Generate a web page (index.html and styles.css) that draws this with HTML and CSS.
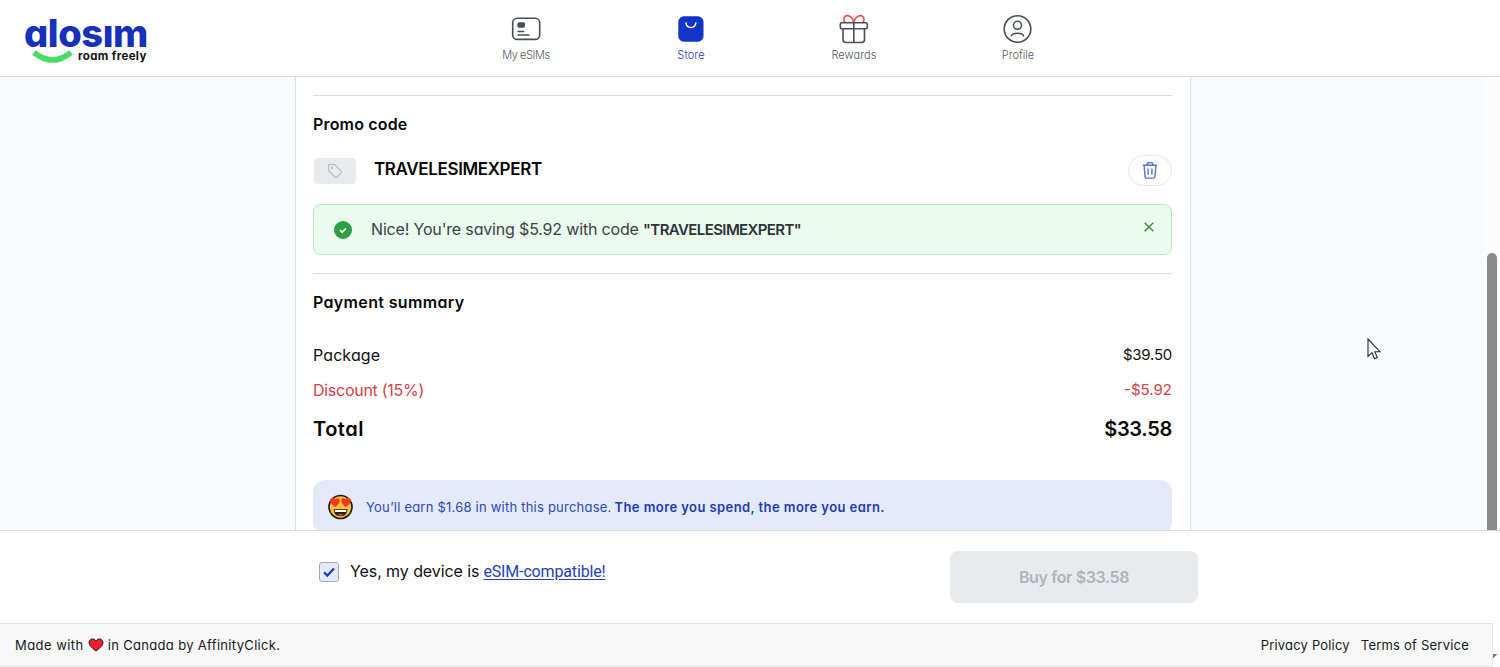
FILE: index.html
```html
<!DOCTYPE html>
<html lang="en">
<head>
<meta charset="utf-8">
<title>aloSIM – Checkout</title>
<link rel="stylesheet" href="styles.css">
</head>
<body>
<div class="app">
  <header class="header">
    <a class="logo">
      <span class="logo-word">alosım</span>
      <span class="logo-sub">
        <svg class="smile" width="42" height="14" viewBox="0 0 42 14"><path d="M3 2.500Q21.500 17.500 40 2.500" fill="none" stroke="#4cdb62" stroke-width="5.500"/></svg>
        <span class="logo-tag">roam freely</span>
      </span>
    </a>
    <nav class="nav">
      <a class="nav-item">
        <svg width="30" height="30" viewBox="0 0 30 30" fill="none" stroke="#4b4f54" stroke-linecap="round"><rect x="1.700" y="4.200" width="27" height="21.200" rx="4.500" stroke-width="1.600"/><rect x="6.300" y="8.300" width="7.700" height="5.500" rx="1.700" fill="#4b4f54" stroke="none"/><path d="M7 17.500h5.800M7 21h11" stroke-width="1.300"/></svg>
        <span class="nav-label nav-esims">My eSIMs</span>
      </a>
      <a class="nav-item item-store">
        <svg width="30" height="30" viewBox="0 0 30 30"><rect x="2.300" y="2.300" width="25.200" height="25.400" rx="5.500" fill="#1434c8"/><path d="M10 9c.8 6 9 6 9.800 0" fill="none" stroke="#fff" stroke-width="1.600" stroke-linecap="round"/></svg>
        <span class="nav-label nav-store">Store</span>
      </a>
      <a class="nav-item">
        <svg width="30" height="30" viewBox="0 0 30 30" fill="none" stroke="#4b4f54" stroke-width="1.600" stroke-linejoin="round"><path d="M14.800 8.500C13 .5 4.800-.5 4.800 5.500q0 2 1.300 3M14.800 8.500C16.500.5 25-.5 25 5.500q0 2-1.300 3" stroke="#ee4a4f"/><rect x="1.300" y="8.800" width="27" height="6" rx="1.500"/><path d="M4 14.800v10.700q0 3 3 3h15.500q3 0 3-3V14.800M14.800 8.800v19.700"/></svg>
        <span class="nav-label nav-rewards">Rewards</span>
      </a>
      <a class="nav-item">
        <svg width="30" height="30" viewBox="0 0 30 30" fill="none" stroke="#4b4f54" stroke-width="1.600" stroke-linecap="round"><circle cx="14.500" cy="15" r="13.300"/><circle cx="14.500" cy="11.300" r="4"/><path d="M8.500 21.700c1-3.200 11-3.200 12 0"/></svg>
        <span class="nav-label nav-profile">Profile</span>
      </a>
    </nav>
  </header>

  <main class="main">
    <section class="card">
      <div class="promo">
        <h2 class="title title-promo">Promo code</h2>
        <div class="code-row">
          <span class="tag"><svg width="16" height="16" viewBox="0 0 16 16" fill="none" stroke="#b9bcc4" stroke-width="1.100" stroke-linejoin="round"><path d="M1.500 2.500Q1.500 1.500 2.500 1.500H7.500L14 8Q15 9 14 10L10 14Q9 15 8 14L1.500 7.500Z"/><circle cx="4.800" cy="4.800" r=".8"/></svg></span>
          <span class="code">TRAVELESIMEXPERT</span>
          <button class="trash"><svg width="18" height="19" viewBox="0 0 18 20" fill="none" stroke="#5b74d0" stroke-width="1.500" stroke-linejoin="round"><path d="M1.500 4.500h15M6 4.300V2.800q0-1 1-1h4q1 0 1 1v1.500M2.800 4.500l1 12q.1 1.500 1.600 1.500h7.200q1.500 0 1.600-1.500l1-12M7 8v6.500M11 8v6.500"/></svg></button>
        </div>
        <div class="alert">
          <svg class="ok" width="18" height="18" viewBox="0 0 18 18"><circle cx="9" cy="9" r="9" fill="#2f9e44"/><path d="M6 9.100l2.200 2.100L12 7.400" fill="none" stroke="#fff" stroke-width="1.700"/></svg>
          <span class="alert-text">Nice! You're saving $5.92 with code <b>"TRAVELESIMEXPERT"</b></span>
          <svg class="close" width="10" height="10" viewBox="0 0 10 10"><path d="M.7.7l8.600 8.600M9.300.7L.7 9.300" stroke="#2b8a3e" stroke-width="1.300"/></svg>
        </div>
      </div>
      <div class="summary">
        <h2 class="title title-pay">Payment summary</h2>
        <div class="row"><span class="package">Package</span><span class="price">$39.50</span></div>
        <div class="row discount"><span class="disc">Discount (15%)</span><span class="price-disc">-$5.92</span></div>
        <div class="row total"><span class="tot">Total</span><span class="price-tot">$33.58</span></div>
      </div>
      <div class="earn">
        <svg width="26" height="26" viewBox="0 0 26 26"><circle cx="12.500" cy="13" r="11.500" fill="#fcbd3c" stroke="#211c19" stroke-width="1.700"/><path d="M7 13Q1 8.500 2.300 5.500C4 2.800 6.500 3.500 7.500 5.200 9.500 3.200 12 4.500 11.600 7.200Q11 10.500 7 13ZM18 13Q24 8.500 22.700 5.500C21 2.800 18.500 3.500 17.500 5.200 15.500 3.200 13 4.500 13.400 7.200Q14 10.500 18 13Z" fill="#ed3b20"/><path d="M5.500 15.300h14q-.5 7-7 7t-7-7Z" fill="#26201d"/><path d="M6.800 16h11.400v2H6.800Z" fill="#fff"/><path d="M9.500 20.800q3-1.600 6 0-3 1.500-6 0Z" fill="#ed5a35"/></svg>
        <span class="earn-text">You’ll earn $1.68 in with this purchase. </span><b class="earn-bold">The more you spend, the more you earn.</b>
      </div>
    </section>
    <div class="track"><div class="thumb"></div></div>
    <svg class="cursor" width="14" height="22" viewBox="0 0 14 22"><path d="M1 1v17.500l4-3.800 2.600 6 2.700-1.200-2.500-5.800H13Z" fill="#fff" stroke="#2b2733" stroke-width="1.100"/></svg>
  </main>

  <section class="buybar">
    <label class="confirm">
      <span class="check"><svg width="14" height="12" viewBox="0 0 14 12"><path d="M2 6.300l3.300 3.300L12 2.500" fill="none" stroke="#1c3cb8" stroke-width="2.200"/></svg></span>
      <span class="yes">Yes, my device is</span><a class="compat">eSIM-compatible!</a>
    </label>
    <button class="buy"><span>Buy for $33.58</span></button>
  </section>

  <div class="foot-wrap">
    <footer class="footer">
      <span class="made">Made with</span>
      <svg class="heart" width="16" height="14" viewBox="0 0 16 14"><path d="M8 13Q1 8.200 1 4.500C1.200.5 6.200-.2 8 3 9.800-.2 14.800.5 15 4.500Q15 8.200 8 13Z" fill="#eb2030" stroke="#36191c"/></svg>
      <span class="canada">in Canada by AffinityClick.</span>
      <a class="privacy">Privacy Policy</a>
      <a class="terms">Terms of Service</a>
    </footer>
    <svg class="corner" width="5" height="5" viewBox="0 0 5 5"><path d="M0 0h4.500L0 4.500Z" fill="#77797b"/></svg>
  </div>
</div>
</body>
</html>
```
FILE: styles.css
```css
* { box-sizing: border-box; }
body {
  margin: 0;
  background: #fff;
  color: #111;
  font: 16px/24px Inter, "Open Sans", sans-serif;
  font-feature-settings: "cv11";
  white-space: nowrap;
}
.app { display: flex; flex-direction: column; height: 667px; overflow: hidden; }
h2 { margin: 0; }
button { font: inherit; font-feature-settings: inherit; border: 0; padding: 0; }
svg { display: block; flex: none; }

.header { display: flex; flex: none; height: 77px; border-bottom: 1px solid #d9dadb; }
.logo { width: 444px; padding: 18px 0 0 24px; }
.logo-word { display: block; height: 32px; font-size: 38px; line-height: 30px; font-weight: 800; color: #1731b8; letter-spacing: -0.4px; }
.logo-sub { display: flex; padding-left: 7px; }
.smile { margin-right: 5px; }
.logo-tag { font-size: 11.5px; font-weight: 700; line-height: 12px; letter-spacing: 0.36px; color: #111; }
.nav { display: flex; }
.nav-item { display: flex; flex-direction: column; align-items: center; width: 164px; padding-top: 14px; }
.item-store { padding-left: 2px; }
.nav-label { margin-top: 2px; font-size: 11px; line-height: 18px; font-weight: 300; color: #55585c; }
.nav-esims { letter-spacing: -0.4px; }
.nav-store { color: #2443bd; letter-spacing: 0.1px; }
.nav-rewards { letter-spacing: 0.1px; }

.main { position: relative; display: flex; flex: none; height: 453px; overflow: hidden; background: #f8fafc; }
.card { width: 896px; height: 453px; margin-left: 295px; padding: 18px 18px 0 17px; background: #fff; border: 1px solid #dedfe1; border-width: 0 1px; overflow: hidden; }
.promo { height: 178px; border-top: 1px solid #dcdddf; padding-top: 16px; }
.title { font-size: 16px; line-height: 24px; font-weight: 600; color: #080808; }
.title-promo { letter-spacing: 0.17px; }
.code-row { display: flex; align-items: center; height: 32px; margin-top: 19px; }
.tag { display: flex; align-items: center; justify-content: center; width: 42px; height: 26px; margin-left: 1px; border-radius: 4px; background: #e9eaee; }
.code { margin: -5px 0 0 18px; font-size: 17px; font-weight: 600; letter-spacing: -0.36px; color: #050505; }
.trash { display: flex; align-items: center; justify-content: center; width: 44px; height: 31px; margin: -2px 0 0 auto; border: 1px solid #e7e8ec; border-radius: 16px; background: #fff; }
.alert { display: flex; align-items: center; height: 51px; margin-top: 17px; padding: 0 17px 0 20px; border: 1px solid #b2ebbd; border-radius: 8px; background: #ebfbee; }
.alert-text { margin: -1px 0 0 19px; letter-spacing: -0.17px; color: #3b4148; }
.alert-text b { font-size: 15px; font-weight: 600; letter-spacing: -0.6px; color: #2d3338; }
.close { margin: -5px 0 0 auto; }
.summary { height: 207px; border-top: 1px solid #dcdddf; padding-top: 16px; }
.row { display: flex; justify-content: space-between; height: 35px; }
.title-pay { margin-bottom: 29px; letter-spacing: 0.34px; }
.package { letter-spacing: 0.1px; }
.price { font-size: 15px; letter-spacing: -0.25px; }
.disc { letter-spacing: -0.28px; }
.price-disc { font-size: 15px; }
.discount { color: #d6404a; }
.total { padding-top: 4px; font-size: 20px; font-weight: 600; color: #050505; }
.tot { letter-spacing: 0.5px; }
.price-tot { letter-spacing: -0.3px; }
.earn { display: flex; align-items: center; height: 54px; padding-left: 15px; border-radius: 12px; background: #e4e9f8; color: #2c49b9; font-size: 13px; }
.earn-text { margin-left: 12px; letter-spacing: 0.22px; }
.earn-bold { margin-left: 3px; font-weight: 600; letter-spacing: 0.42px; color: #1d3cb0; }
.track { width: 16px; margin-left: auto; padding: 176px 3px 0; background: #fcfcfd; }
.thumb { height: 277px; border-radius: 5px 5px 0 0; background: #8a8a8a; }
.cursor { position: absolute; left: 1367px; top: 261px; }

.buybar { display: flex; flex: none; height: 93px; border-top: 1px solid #d9dadc; }
.confirm { display: flex; align-items: center; width: 631px; height: 24px; margin: 29px 0 0 319px; }
.check { display: flex; align-items: center; justify-content: center; width: 20px; height: 20px; margin: -1px 11px 0 0; border: 1px solid #a5aaba; border-radius: 3px; background: #e5eafa; }
.yes { margin-top: -2px; letter-spacing: -0.08px; }
.compat { margin: -1px 0 0 4px; font-family: Roboto, sans-serif; letter-spacing: -0.15px; color: #2443b5; text-decoration: underline; text-underline-offset: 2px; }
.buy { width: 248px; height: 52px; margin-top: 20px; border-radius: 8px; background: #e9eaee; color: #adb5bd; font-weight: 600; letter-spacing: -0.38px; }

.foot-wrap { display: flex; height: 44px; }
.footer { display: flex; align-items: center; width: 1493px; height: 44px; padding: 0 23px 0 15px; border: 1px solid #e5e6e7; border-left: 0; background: #f8f8f8; font-size: 13px; color: #16181a; }
.made { letter-spacing: 0.45px; }
.heart { margin: 0 4px 0 4px; }
.canada { letter-spacing: 0.33px; }
.privacy { margin-left: auto; letter-spacing: 0.18px; }
.terms { margin-left: 11px; letter-spacing: 0.22px; }
.corner { margin-top: 31px; }
```
